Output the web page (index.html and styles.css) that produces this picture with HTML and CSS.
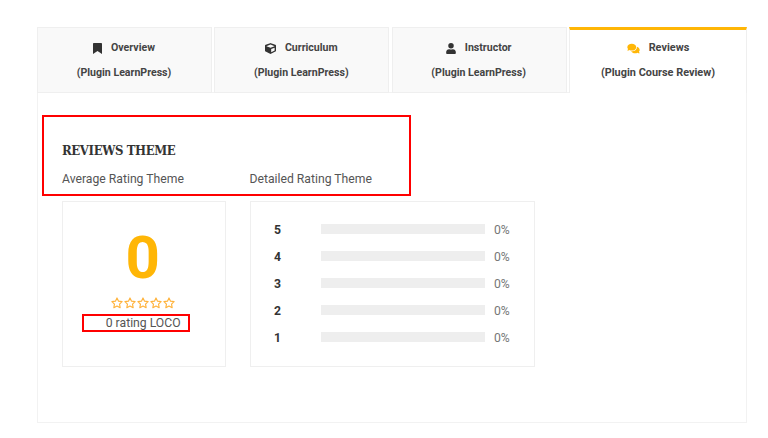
FILE: index.html
```html
<!DOCTYPE html>
<html lang="en">
<head>
<meta charset="utf-8">
<title>Course reviews</title>
<link rel="stylesheet" href="styles.css">
</head>
<body>
<svg class="defs" aria-hidden="true">
  <symbol id="star" viewBox="0 0 24 24"><path d="M12 1.8l3.1 6.5 7.1 1-5.1 5 1.2 7.1-6.3-3.4-6.3 3.4 1.2-7.1-5.1-5 7.1-1z" fill="none" stroke="currentColor" stroke-width="2.3" stroke-linejoin="round"/></symbol>
</svg>
<main class="course">
  <nav class="tabs">
    <a class="tab">
      <span class="tab-title"><svg class="icon bookmark" viewBox="0 0 9 11"><path d="M.8 0h7.4q.8 0 .8.8V11L4.5 8.1 0 11V.8Q0 0 .8 0z"/></svg>Overview</span>
      <span>(Plugin LearnPress)</span>
    </a>
    <a class="tab">
      <span class="tab-title"><svg class="icon cube" viewBox="0 0 512 512"><path fill-rule="evenodd" d="M239 6L31 84Q0 96 0 129v226q0 31 27 44l208 104q21 11 42 0l208-104q27-13 27-44V129q0-33-31-45L273 6q-17-6-34 0zm17 68l192 72v1l-192 78-192-78v-1zm32 357V282l160-66v135z"/></svg>Curriculum</span>
      <span>(Plugin LearnPress)</span>
    </a>
    <a class="tab">
      <span class="tab-title"><svg class="icon user" viewBox="0 0 448 512"><path d="M224 256a128 128 0 1 0 0-256 128 128 0 0 0 0 256zm90 32h-17a174 174 0 0 1-146 0h-17C60 288 0 348 0 422v42c0 27 21 48 48 48h352c27 0 48-21 48-48v-42c0-74-60-134-134-134z"/></svg>Instructor</span>
      <span>(Plugin LearnPress)</span>
    </a>
    <a class="tab active">
      <span class="tab-title"><svg class="icon chat" viewBox="0 0 576 512"><path d="M416 192c0-88-93-160-208-160S0 104 0 192c0 34 14 66 38 92-13 30-36 54-36 55-5 5-1 13 6 13 38 0 70-13 92-26 32 16 69 26 108 26 115 0 208-72 208-160zm122 220c24-26 38-58 38-92 0-67-53-124-129-148 1 7 1 13 1 20 0 106-108 192-240 192-11 0-21-1-32-2 32 57 106 98 192 98 40 0 76-10 108-26 22 13 54 26 92 26 7 0 11-8 6-13 0-1-23-25-36-55z"/></svg>Reviews</span>
      <span>(Plugin Course Review)</span>
    </a>
  </nav>
  <section class="panel">
    <header class="panel-head">
      <h2>REVIEWS THEME</h2>
      <div class="columns labels">
        <span>Average Rating Theme</span>
        <span>Detailed Rating Theme</span>
      </div>
    </header>
    <div class="columns">
      <div class="card average">
        <strong>0</strong>
        <div class="stars">
          <svg><use href="#star"/></svg><svg><use href="#star"/></svg><svg><use href="#star"/></svg><svg><use href="#star"/></svg><svg><use href="#star"/></svg>
        </div>
        <div class="count">0 rating LOCO</div>
      </div>
      <div class="card detail">
        <div class="row"><b>5</b><i class="bar"></i><span>0%</span></div>
        <div class="row"><b>4</b><i class="bar"></i><span>0%</span></div>
        <div class="row"><b>3</b><i class="bar"></i><span>0%</span></div>
        <div class="row"><b>2</b><i class="bar"></i><span>0%</span></div>
        <div class="row"><b>1</b><i class="bar"></i><span>0%</span></div>
      </div>
    </div>
  </section>
</main>
</body>
</html>
```
FILE: styles.css
```css
* { box-sizing: border-box; }
body {
  margin: 0;
  background: #fff;
  color: #555;
  font-family: Roboto, "Liberation Sans", sans-serif;
  font-size: 12.2px;
}
.defs { position: absolute; width: 0; height: 0; }
.course { width: 710px; margin: 27px 0 0 37px; }

.tabs {
  display: grid;
  grid-template-columns: 175px 175px 175px 178px;
  column-gap: 2.33px;
  height: 66px;
  background: linear-gradient(#f2f2f2, #f2f2f2) 0 65px / 532px 1px no-repeat;
}
.tab {
  display: flex;
  flex-direction: column;
  align-items: center;
  padding: 8px 1px 0 0;
  border: 1px solid #efefef;
  background: #f9f9f9;
  color: #444;
  font-size: 10.6px;
  font-weight: 700;
  line-height: 24.5px;
}
.tab.active {
  padding: 6px 0 0;
  border-top: 3px solid #ffb606;
  border-bottom: 0;
  background: #fff;
  font-size: 10.9px;
}
.tab-title { display: flex; align-items: center; }
.icon { fill: #333; height: 11px; margin: 1px 9px 0 0; }
.bookmark { width: 9px; }
.cube { width: 11px; }
.user { width: 10px; }
.chat { width: 13px; fill: #ffb606; }

.panel {
  height: 330px;
  padding: 22px 4px;
  border: 1px solid #f2f2f2;
  border-top: 0;
}
.panel-head {
  width: 369px;
  height: 81px;
  padding: 26px 0 0 18px;
  border: 2px solid #f00;
}
h2 {
  margin: 0;
  color: #333;
  font-family: "Roboto Slab", "DejaVu Serif Condensed", "DejaVu Serif", serif;
  font-size: 13px;
  font-weight: 700;
  letter-spacing: -0.38px;
  line-height: 16px;
}
.columns {
  display: grid;
  grid-template-columns: 163.5px 285.5px;
  column-gap: 24px;
  margin: 5px 0 0 20px;
}
.labels { margin: 12px 0 0; line-height: 17px; }
.card { height: 166px; border: 1px solid #efefef; }
.average { display: flex; flex-direction: column; align-items: center; }
.average strong {
  margin: 26px 2px 0 0;
  color: #ffb606;
  font-size: 60px;
  line-height: 60px;
}
.stars { display: flex; gap: 1px; margin: 9px 2px 0 0; color: #ffb33c; }
.stars svg { width: 12px; height: 12px; }
.count {
  width: 108px;
  height: 18px;
  margin: 5px 16px 0 0;
  padding-left: 22px;
  border: 2px solid #f00;
  line-height: 15px;
}
.detail { padding: 13.5px 23.5px 0; }
.row {
  display: grid;
  grid-template-columns: 47px 164px 1fr;
  align-items: center;
  height: 27px;
}
.row b { padding-top: 2px; color: #333; }
.row span { padding: 2px 0 0 9px; color: #777; }
.bar { height: 10px; background: #eee; }
```
